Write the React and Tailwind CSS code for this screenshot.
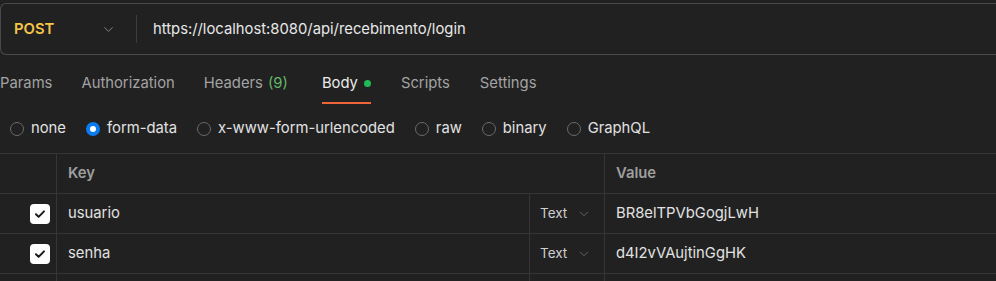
import { ChevronDown } from "lucide-react"

const tabs = [
  { name: "Params", gap: "" },
  { name: "Authorization", gap: "ml-[29px]" },
  { name: "Headers", count: "(9)", gap: "ml-[29px]" },
  { name: "Body", active: true, dot: true, gap: "ml-[34px]" },
  { name: "Scripts", gap: "ml-[30px]" },
  { name: "Settings", gap: "ml-[30px]" },
]

const bodyTypes = ["none", "form-data", "x-www-form-urlencoded", "raw", "binary", "GraphQL"]

const rows = [
  { key: "usuario", value: "BR8elTPVbGogjLwH" },
  { key: "senha", value: "d4I2vVAujtinGgHK" },
]

const Radio = ({ checked }) =>
  checked ? (
    <span className="w-[14px] h-[14px] rounded-full bg-[#0a7bf0] flex items-center justify-center">
      <span className="w-[6px] h-[6px] rounded-full bg-white" />
    </span>
  ) : (
    <span className="w-[14px] h-[14px] rounded-full border border-[#6a6a6a]" />
  )

const Check = () => (
  <span className="w-[20px] h-[20px] rounded-[4px] bg-white flex items-center justify-center">
    <svg width="12" height="12" viewBox="0 0 12 12" fill="none">
      <path d="M2 6.3l2.6 2.6L10 3.4" stroke="#1a1a1a" strokeWidth="2" strokeLinecap="round" strokeLinejoin="round" />
    </svg>
  </span>
)

export default function App() {
  return (
    <div className="w-[996px] h-[281px] overflow-hidden bg-[#212121] text-[14.8px] font-['Inter','Liberation_Sans',sans-serif]">
      <div className="pt-[3px]">
        <div className="h-[52px] flex items-center border border-r-0 border-[#4a4a4a] rounded-l-[6px]">
          <div className="w-[135px] flex items-center pl-[13px] pr-[20px] justify-between">
            <span className="font-semibold text-[#f5c54a]">POST</span>
            <ChevronDown size={15} strokeWidth={1.5} className="text-[#8a8a8a]" />
          </div>
          <div className="w-px h-[28px] bg-[#3c3c3c]" />
          <span className="ml-[16px] text-[#e8e8e8]">https://localhost:8080/api/recebimento/login</span>
        </div>
      </div>

      <div className="mt-[9px] flex">
        {tabs.map((t) => (
          <div
            key={t.name}
            className={
              (t.active
                ? "h-[40px] flex items-center gap-[6px] border-b-2 border-[#f0643a] text-[#ececec] "
                : "h-[40px] flex items-center gap-[5px] border-b-2 border-transparent text-[#a3a3a3] ") + t.gap
            }
          >
            <span>{t.name}</span>
            {t.count && <span className="text-[#63b86b]">{t.count}</span>}
            {t.dot && <span className="w-[7px] h-[7px] rounded-full bg-[#1fb955]" />}
          </div>
        ))}
      </div>

      <div className="h-[49px] flex items-center gap-[20px] pl-[10px]">
        {bodyTypes.map((b) => (
          <div key={b} className="flex items-center gap-[7px] text-[#e2e2e2]">
            <Radio checked={b === "form-data"} />
            <span>{b}</span>
          </div>
        ))}
      </div>

      <div className="grid grid-cols-[56px_473px_75px_1fr] border-t border-[#353535]">
        <div className="h-[40px] border-b border-[#353535]" />
        <div className="col-span-2 h-[40px] flex items-center pl-[11px] border-l border-b border-[#353535] font-semibold text-[#9e9e9e]">
          Key
        </div>
        <div className="h-[40px] flex items-center pl-[11px] border-l border-b border-[#353535] font-semibold text-[#9e9e9e]">
          Value
        </div>
        {rows.map((r) => (
          <div key={r.key} className="contents">
            <div className="h-[40px] flex items-center justify-end pr-[6px] border-b border-[#353535]">
              <Check />
            </div>
            <div className="h-[40px] flex items-center pl-[11px] border-l border-b border-[#353535] text-[#e2e2e2]">
              {r.key}
            </div>
            <div className="h-[40px] flex items-center pl-[10px] gap-[10px] border-l border-b border-[#353535] text-[#cfcfcf] text-[13.5px]">
              <span>Text</span>
              <ChevronDown size={14} strokeWidth={1.5} className="text-[#6f6f6f]" />
            </div>
            <div className="h-[40px] flex items-center pl-[11px] border-l border-b border-[#353535] text-[#e2e2e2]">
              {r.value}
            </div>
          </div>
        ))}
        <div className="h-[10px]" />
        <div className="h-[10px] border-l border-[#353535]" />
        <div className="h-[10px] border-l border-[#353535]" />
        <div className="h-[10px] border-l border-[#353535]" />
      </div>
    </div>
  )
}
